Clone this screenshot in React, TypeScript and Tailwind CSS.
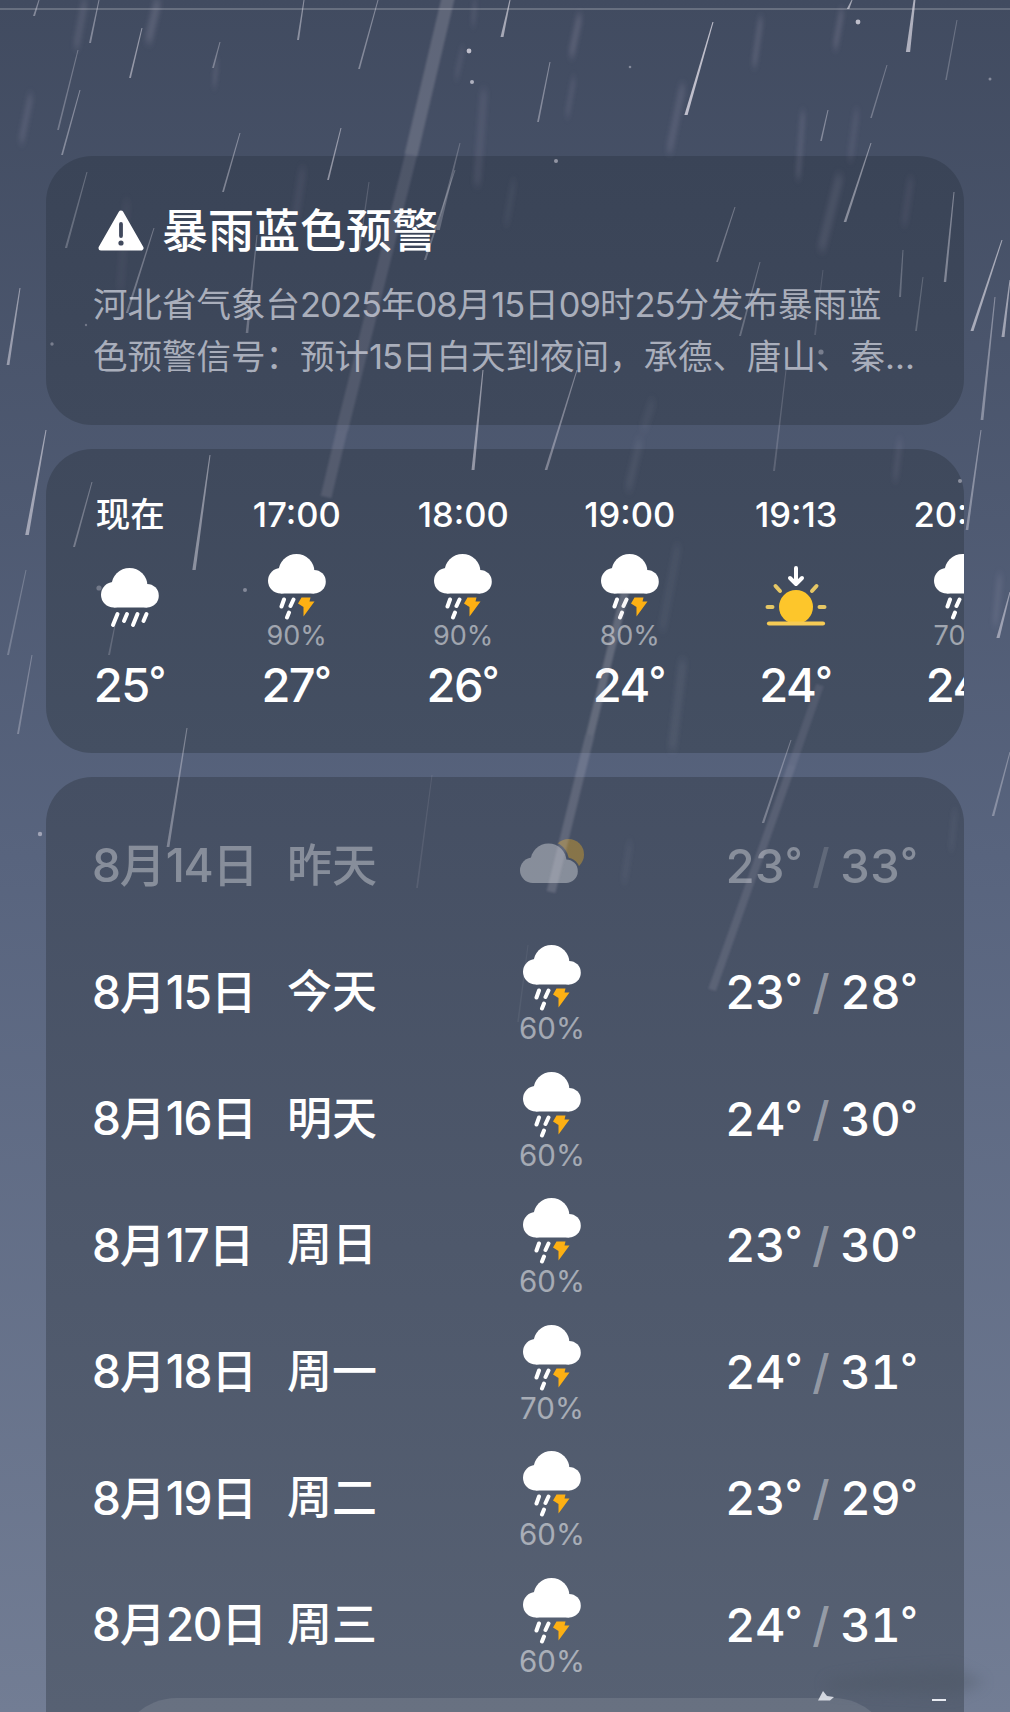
import type { ReactNode } from 'react';

type Sky = 'rain' | 'thunder' | 'sunset' | 'cloudy';

interface HourItem {
  time: string;
  sky: Sky;
  chance?: string;
  temp: number;
}

interface DayItem {
  date: number;
  label: string;
  sky: Sky;
  chance?: string;
  low: number;
  high: number;
  past?: boolean;
}

const hours: HourItem[] = [
  { time: '现在', sky: 'rain', temp: 25 },
  { time: '17:00', sky: 'thunder', chance: '90%', temp: 27 },
  { time: '18:00', sky: 'thunder', chance: '90%', temp: 26 },
  { time: '19:00', sky: 'thunder', chance: '80%', temp: 24 },
  { time: '19:13', sky: 'sunset', temp: 24 },
  { time: '20:00', sky: 'thunder', chance: '70%', temp: 24 },
];

const days: DayItem[] = [
  { date: 14, label: '昨天', sky: 'cloudy', low: 23, high: 33, past: true },
  { date: 15, label: '今天', sky: 'thunder', chance: '60%', low: 23, high: 28 },
  { date: 16, label: '明天', sky: 'thunder', chance: '60%', low: 24, high: 30 },
  { date: 17, label: '周日', sky: 'thunder', chance: '60%', low: 23, high: 30 },
  { date: 18, label: '周一', sky: 'thunder', chance: '70%', low: 24, high: 31 },
  { date: 19, label: '周二', sky: 'thunder', chance: '60%', low: 23, high: 29 },
  { date: 20, label: '周三', sky: 'thunder', chance: '60%', low: 24, high: 31 },
];

// [x1, y1, x2, y2, width, opacity]
const thinDrops: number[][] = [
  [39, 0, 34, 16, 2, 0.4],
  [99, 0, 90, 43, 2, 0.4],
  [78, 50, 58, 130, 1.8, 0.3],
  [80, 90, 62, 155, 1.8, 0.4],
  [142, 28, 130, 78, 1.8, 0.5],
  [220, 42, 213, 68, 1.8, 0.35],
  [240, 133, 223, 192, 1.8, 0.4],
  [304, 0, 298, 40, 2, 0.45],
  [378, 0, 359, 69, 1.8, 0.4],
  [341, 128, 328, 180, 1.8, 0.5],
  [510, 0, 502, 37, 3, 0.6],
  [550, 62, 538, 122, 1.8, 0.4],
  [713, 22, 686, 115, 3.2, 0.75],
  [917, -20, 908, 52, 4.2, 0.65],
  [852, 0, 848, 9, 2.5, 0.6],
  [957, 20, 946, 80, 1.5, 0.25],
  [887, 65, 871, 118, 1.6, 0.3],
  [828, 110, 821, 141, 1.6, 0.4],
  [871, 143, 845, 222, 2.6, 0.45],
  [735, 207, 717, 262, 1.8, 0.32],
  [760, 262, 740, 336, 2, 0.26],
  [954, 192, 945, 282, 2.4, 0.4],
  [903, 250, 900, 297, 2, 0.26],
  [923, 277, 916, 331, 1.8, 0.22],
  [1002, 240, 972, 331, 3, 0.6],
  [1010, 280, 1003, 337, 3, 0.55],
  [995, 297, 982, 420, 2.8, 0.4],
  [87, 172, 66, 248, 2.2, 0.26],
  [154, 228, 127, 313, 2.4, 0.32],
  [20, 288, 8, 365, 2.8, 0.5],
  [257, 235, 247, 333, 2.6, 0.28],
  [460, 143, 438, 230, 3.6, 0.24],
  [455, 170, 425, 260, 2.2, 0.26],
  [369, 182, 359, 252, 1.8, 0.18],
  [483, 370, 473, 470, 3, 0.5],
  [577, 370, 546, 470, 2.6, 0.38],
  [786, 370, 774, 471, 2, 0.18],
  [823, 270, 815, 335, 1.8, 0.14],
  [46, 430, 27, 535, 3.6, 0.55],
  [92, 482, 74, 547, 2, 0.32],
  [210, 455, 194, 570, 3.4, 0.45],
  [981, 430, 967, 530, 2.6, 0.4],
  [1010, 592, 998, 638, 3.2, 0.5],
  [26, 570, 8, 655, 2, 0.25],
  [32, 655, 18, 734, 2, 0.3],
  [115, 625, 109, 655, 2, 0.2],
  [187, 728, 168, 847, 2.8, 0.36],
  [791, 740, 763, 823, 2.4, 0.32],
  [1010, 752, 993, 816, 2.4, 0.35],
  [432, 775, 417, 888, 1.8, 0.1],
  [528, 945, 518, 1022, 1.6, 0.07],
];

const softDrops: number[][] = [
  [85, 0, 76, 48, 7, 0.11],
  [158, 0, 148, 42, 8, 0.15],
  [31, 95, 21, 142, 6, 0.12],
  [217, 60, 214, 86, 3, 0.16],
  [484, 90, 477, 185, 8, 0.08],
  [475, 0, 473, 25, 4, 0.1],
  [463, 48, 456, 78, 4, 0.1],
  [580, 15, 571, 56, 6, 0.16],
  [574, 78, 567, 116, 4, 0.12],
  [761, 18, 754, 66, 5, 0.15],
  [842, 10, 835, 48, 5, 0.16],
  [683, 85, 669, 152, 7, 0.12],
  [803, 112, 798, 178, 5, 0.12],
  [857, 110, 850, 160, 6, 0.08],
  [840, 175, 821, 250, 9, 0.09],
  [911, 178, 904, 225, 7, 0.06],
  [303, 168, 295, 220, 8, 0.06],
  [127, 200, 120, 290, 8, 0.04],
  [514, 180, 506, 225, 6, 0.05],
  [653, 400, 643, 430, 8, 0.05],
  [640, 440, 628, 490, 8, 0.07],
  [900, 440, 895, 480, 6, 0.08],
  [678, 545, 662, 630, 8, 0.05],
  [683, 660, 672, 750, 9, 0.07],
  [1000, 575, 995, 625, 6, 0.09],
  [630, 842, 624, 882, 6, 0.05],
  [955, 810, 951, 850, 5, 0.05],
];

const wideDrops: number[][] = [
  [450, -10, 411, 155, 13, 0.2],
  [411, 155, 342, 430, 12, 0.13],
  [342, 430, 326, 497, 11, 0.14],
  [625, 592, 590, 735, 8, 0.22],
  [590, 735, 551, 892, 9, 0.18],
  [820, 685, 792, 765, 8, 0.1],
  [792, 765, 712, 990, 8, 0.13],
];

const specks: number[][] = [
  [469, 51, 2.4, 0.75],
  [472, 82, 2, 0.65],
  [858, 22, 2.4, 0.75],
  [556, 161, 2, 0.5],
  [630, 67, 1.3, 0.4],
  [990, 79, 1.5, 0.4],
  [821, 352, 2.6, 0.35],
  [52, 344, 1.7, 0.35],
  [86, 325, 1.2, 0.3],
  [960, 481, 2, 0.45],
  [99, 588, 2.6, 0.3],
  [245, 590, 2, 0.4],
  [40, 834, 2.2, 0.5],
];

function Rain() {
  return (
    <svg className="pointer-events-none absolute inset-0" width="1010" height="1712" viewBox="0 0 1010 1712">
      <defs>
        <filter id="soft" filterUnits="userSpaceOnUse" x="0" y="0" width="1010" height="1712">
          <feGaussianBlur stdDeviation="2 5" />
        </filter>
        <filter id="edge" filterUnits="userSpaceOnUse" x="0" y="0" width="1010" height="1712">
          <feGaussianBlur stdDeviation="1" />
        </filter>
        <filter id="smudge" filterUnits="userSpaceOnUse" x="780" y="1640" width="230" height="72">
          <feGaussianBlur stdDeviation="7" />
        </filter>
      </defs>
      <g stroke="#d6cfe0" filter="url(#soft)">
        {softDrops.map(([x1, y1, x2, y2, w, o], i) => (
          <line key={i} x1={x1} y1={y1} x2={x2} y2={y2} strokeWidth={w} opacity={o} />
        ))}
      </g>
      <g stroke="#d6cfdc" filter="url(#edge)">
        {wideDrops.map(([x1, y1, x2, y2, w, o], i) => (
          <line key={i} x1={x1} y1={y1} x2={x2} y2={y2} strokeWidth={w} opacity={o} />
        ))}
      </g>
      {/* Drops taper towards the top */}
      <g fill="#e9e6ef">
        {thinDrops.map(([x1, y1, x2, y2, w, o], i) => (
          <polygon
            key={i}
            points={`${x1 - 0.5},${y1} ${x1 + 0.5},${y1} ${x2 + w / 2},${y2} ${x2 - w / 2},${y2}`}
            opacity={o}
          />
        ))}
        {specks.map(([cx, cy, r, o], i) => (
          <circle key={i} cx={cx} cy={cy} r={r} opacity={o} />
        ))}
      </g>
      <path d="M825 1681L885 1672L955 1668L985 1682L955 1695L830 1690Z" fill="#4b5462" opacity="0.35" filter="url(#smudge)" />
      <path d="M818 1700.5L823 1691L827 1696L834 1697L830 1700.5Z" fill="#e8ebf2" opacity="0.85" />
      <path d="M932 1699H946V1701H932Z" fill="#e8ebf2" />
    </svg>
  );
}

function CloudShape() {
  return (
    <g fill="white">
      <circle cx="28.5" cy="18" r="18" />
      <circle cx="12.8" cy="26.7" r="12.8" />
      <circle cx="46" cy="27.7" r="11.8" />
      <rect x="12.8" y="20" width="33.5" height="19.5" />
    </g>
  );
}

function SkyIcon({ sky }: { sky: Sky }) {
  if (sky === 'sunset') {
    return (
      <svg width="62" height="66" viewBox="0 0 62 66" fill="none" strokeLinecap="round" className="block">
        <path d="M31 3V18.5M25 13L31 19L37 13" stroke="white" strokeWidth="4" strokeLinejoin="round" />
        <circle cx="31" cy="42" r="17" fill="#fdc62b" />
        <path d="M10.5 21L15 26M51.5 21L47 26M2.5 42H7.5M54.5 42H59.5" stroke="#e6c765" strokeWidth="4" />
        <path d="M4 58.5H58" stroke="#f6cb55" strokeWidth="4.2" />
      </svg>
    );
  }
  if (sky === 'cloudy') {
    return (
      <svg width="66" height="45" viewBox="0 0 66 45" className="block">
        <defs>
          <mask id="behind-cloud">
            <rect width="66" height="45" fill="white" />
            <circle cx="28.5" cy="22.5" r="20.5" fill="black" />
            <circle cx="46" cy="32.5" r="14" fill="black" />
          </mask>
        </defs>
        <circle cx="48.5" cy="15.5" r="15.5" fill="#ffb81a" mask="url(#behind-cloud)" />
        <g transform="translate(0 4.5)">
          <CloudShape />
        </g>
      </svg>
    );
  }
  return (
    <svg width="58" height="66" viewBox="0 0 58 66" className="block">
      <CloudShape />
      {sky === 'rain' ? (
        <path
          d="M16.5 46L12 57M26 46L23 53M36.5 46L32 57M45.5 46L42.5 53"
          stroke="white"
          strokeWidth="4"
          strokeLinecap="round"
        />
      ) : (
        <>
          <path
            d="M16 45.5L13.5 52.5M25.5 45.5L22.5 52M21 58.5L19 63.5"
            stroke="white"
            strokeWidth="4"
            strokeLinecap="round"
          />
          <path d="M33.5 43.5H42.5L41.5 47.5H46.5L35.5 62.5V53L30 49.5Z" fill="#fdb013" />
        </>
      )}
    </svg>
  );
}

// Digits sit a little tighter than the Chinese characters around them
function MixedText({ text }: { text: string }) {
  return (
    <>
      {text.split(/(\d+)/).map((part, i) =>
        /\d/.test(part) ? (
          <span key={i} className="tracking-[-0.028em]">{part}</span>
        ) : (
          part
        )
      )}
    </>
  );
}

function Degrees({ value }: { value: number }) {
  return (
    <>
      {value}
      <span className="align-[8px] text-[38px] leading-[0] font-medium">°</span>
    </>
  );
}

function Card({ className, children }: { className: string; children: ReactNode }) {
  return <section className={`overflow-hidden bg-gradient-to-b ${className}`}>{children}</section>;
}

function WarningCard() {
  return (
    <Card className="h-[269px] rounded-[46px] from-[#3a4457] to-[#3f495c] px-[47px] pt-[48px]">
      <div className="flex h-[52px] items-center">
        <svg width="46" height="41" viewBox="0 0 46 41" className="ml-[5px] block">
          <path d="M23 3L43 38H3Z" fill="white" stroke="white" strokeWidth="5" strokeLinejoin="round" />
          <path d="M23 14V26" stroke="#3c4559" strokeWidth="3.8" strokeLinecap="round" />
          <circle cx="23" cy="33" r="2.6" fill="#3c4559" />
        </svg>
        <h2 className="ml-[18px] text-[46px] leading-none font-medium">暴雨蓝色预警</h2>
      </div>
      <p className="mt-[23px] text-[34.5px] leading-[52px] whitespace-nowrap text-[#a9aebb]">
        <MixedText text="河北省气象台2025年08月15日09时25分发布暴雨蓝" />
        <br />
        <MixedText text="色预警信号：预计15日白天到夜间，承德、唐山、秦..." />
      </p>
    </Card>
  );
}

const hourIconOffset: Record<Sky, string> = {
  thunder: 'mt-[17px]',
  rain: 'mt-[31px]',
  sunset: 'mt-[28px]',
  cloudy: 'mt-[17px]',
};

function HourlyCard() {
  return (
    <Card className="mt-[24px] h-[304px] rounded-[46px] from-[#3f495c] to-[#444f62]">
      <div className="ml-px flex w-[999px]">
        {hours.map(hour => (
          <div key={hour.time} className="flex w-[166.5px] shrink-0 flex-col items-center pt-[44px]">
            <span className="h-[44px] text-[34.5px] leading-[44px] font-medium">{hour.time}</span>
            <div className={`h-[66px] ${hourIconOffset[hour.sky]}`}>
              <SkyIcon sky={hour.sky} />
            </div>
            {hour.chance && (
              <span className="mt-[2px] h-[28px] text-[27px] leading-[28px] text-white/50">{hour.chance}</span>
            )}
            <span className="mt-auto h-[65px] pr-[2px] text-[47px] leading-[70px] font-medium tracking-[-1.5px]">
              <Degrees value={hour.temp} />
            </span>
          </div>
        ))}
      </div>
    </Card>
  );
}

function DailyCard() {
  return (
    <Card className="mt-[24px] h-[935px] rounded-t-[46px] from-[#454f63] to-[#576173] px-[47px] pt-[25px]">
      {days.map(day => (
        <div key={day.date} className={`flex h-[126.5px] items-center ${day.past ? 'opacity-35' : ''}`}>
          <span className="-ml-px w-[195px] text-[46px] leading-none font-medium">
            <MixedText text={`8月${day.date}日`} />
          </span>
          <span className="w-[220px] text-[45px] leading-none font-medium">{day.label}</span>
          <div className={`flex w-[90px] flex-col items-center ${day.past ? 'pb-[8px] pl-[2px]' : 'pt-[7px]'}`}>
            <SkyIcon sky={day.sky} />
            {day.chance && <span className="text-[29.5px] leading-[34px] text-white/50">{day.chance}</span>}
          </div>
          <div className="ml-auto flex w-[192px] items-center text-[47px] leading-none font-medium tabular-nums">
            <span className="w-[90px] tracking-[-0.5px]">
              <Degrees value={day.low} />
            </span>
            <span className="w-[29px] text-white/40">/</span>
            <span className="whitespace-nowrap tracking-[-0.5px]">
              <Degrees value={day.high} />
            </span>
          </div>
        </div>
      ))}
      <div className="mx-auto mt-[10px] h-[60px] w-[776px] rounded-t-[60px] bg-white/10" />
    </Card>
  );
}

export default function App() {
  return (
    <div className="relative h-[1712px] w-[1010px] overflow-hidden bg-gradient-to-b from-[#414b60] via-[#58647e] to-[#727d94] px-[46px] font-['Inter','Noto_Sans_CJK_SC',sans-serif] text-white">
      <div className="-mx-[46px] mt-[8px] h-[2px] bg-white/20" />
      <main className="mt-[146px]">
        <WarningCard />
        <HourlyCard />
        <DailyCard />
      </main>
      <Rain />
    </div>
  );
}
